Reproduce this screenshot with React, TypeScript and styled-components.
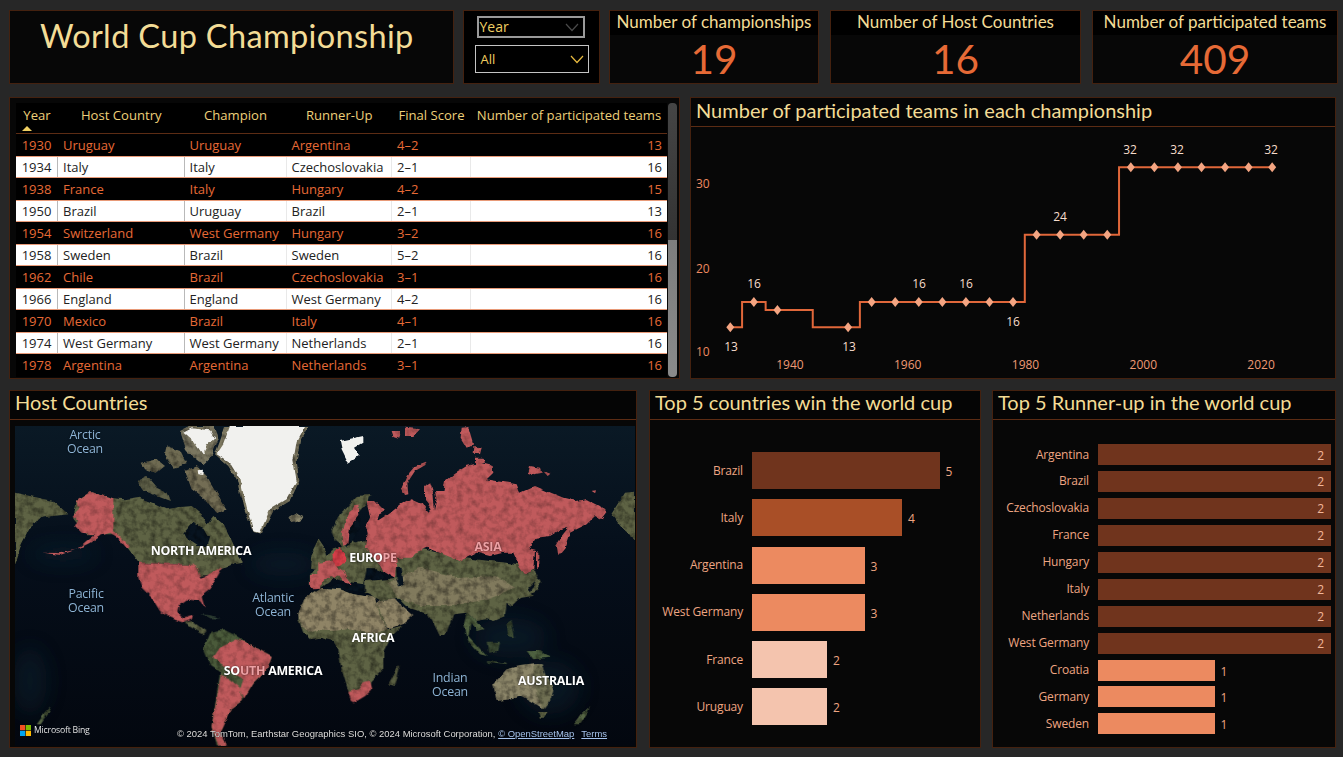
import React from "react";
import styled, { createGlobalStyle } from "styled-components";

const Global = createGlobalStyle`
  html, body { margin: 0; padding: 0; background: #272727; overflow: hidden; }
  * { box-sizing: border-box; }
`;

const TITLE = `"Lato", "Open Sans", sans-serif`;
const BODY = `"Open Sans", "Noto Sans", sans-serif`;
const YELLOW = "#f3dc96";
const ORANGE = "#e66a36";
const EDGE = "#44210f";

const Page = styled.div`
  width: 1343px;
  height: 757px;
  padding: 10px 6px 0 9px;
  display: flex;
  flex-direction: column;
  background: #272727;
  font-family: ${BODY};
`;
const Row = styled.div<{ $h: number; $top?: number; $gap: number }>`
  display: flex;
  height: ${(p) => p.$h}px;
  margin-top: ${(p) => p.$top ?? 0}px;
  gap: ${(p) => p.$gap}px;
`;
const Panel = styled.section<{ $w: number }>`
  width: ${(p) => p.$w}px;
  flex: none;
  background: #070707;
  border: 1px solid ${EDGE};
  display: flex;
  flex-direction: column;
  overflow: hidden;
`;
const TitlePanel = styled(Panel)`
  padding: 1px 0 0 30px;
`;
const Heading = styled.h1`
  margin: 0;
  font: 400 32.5px/48px ${TITLE};
  color: ${YELLOW};
  letter-spacing: 0.35px;
`;
const SlicerPanel = styled(Panel)`
  background: #000;
  align-items: center;
  padding-top: 5px;
`;
const Dropdown = styled.div<{ $w: number; $h: number; $dim?: boolean }>`
  width: ${(p) => p.$w}px;
  height: ${(p) => p.$h}px;
  margin-bottom: 7px;
  margin-left: ${(p) => (p.$dim ? -2 : 0)}px;
  border: ${(p) => (p.$dim ? "2px solid #9a9a9a" : "1px solid #c4c4c4")};
  display: flex;
  align-items: center;
  justify-content: space-between;
  padding: ${(p) => (p.$dim ? 0 : 1)}px 4px 0 ${(p) => (p.$dim ? 1 : 5)}px;
  font: 400 ${(p) => (p.$dim ? 14 : 13)}px/1 ${BODY};
  color: #f0cf62;
`;
const CardGroup = styled.div`
  display: flex;
  gap: 11px;
`;
const Card = styled(Panel)`
  align-items: stretch;
`;
const CardHead = styled.div`
  height: 24px;
  background: #000;
  text-align: center;
  font: 400 17px/21px ${TITLE};
  color: ${YELLOW};
  white-space: nowrap;
`;
const CardValue = styled.div`
  flex: 1;
  text-align: center;
  font: 400 40.5px/48px ${TITLE};
  color: ${ORANGE};
`;
const TablePanel = styled(Panel)`
  flex-direction: row;
  padding: 5px 0 0 6px;
`;
const Table = styled.div`
  width: 651px;
  flex: none;
  overflow: hidden;
`;
const COLS = "42px 126.5px 102px 105.5px 79px 196px";
const HeadRow = styled.div`
  display: grid;
  grid-template-columns: ${COLS};
  height: 31px;
  background: #000;
  border-bottom: 1px solid #5c2c14;
`;
const HeadCell = styled.div`
  position: relative;
  text-align: center;
  font: 400 13.1px/25px ${BODY};
  color: #eed07a;
  white-space: nowrap;
`;
const SortMark = styled.span`
  position: absolute;
  left: 6px;
  top: 23px;
  width: 0;
  height: 0;
  border-left: 5px solid transparent;
  border-right: 5px solid transparent;
  border-bottom: 5px solid #f0cf62;
`;
const DataRow = styled.div<{ $light: boolean }>`
  display: grid;
  grid-template-columns: ${COLS};
  height: 22.05px;
  background: ${(p) => (p.$light ? "#fff" : "#000")};
  color: ${(p) => (p.$light ? "#222" : ORANGE)};
  border-top: 1px solid ${(p) => (p.$light ? "#e89a78" : "#000")};
  border-bottom: 1px solid ${(p) => (p.$light ? "#e89a78" : "#000")};
`;
const Cell = styled.div<{ $light: boolean; $align?: string; $strong?: boolean }>`
  padding: 0 5px;
  text-align: ${(p) => p.$align ?? "left"};
  font: 400 13px/20.5px ${BODY};
  white-space: nowrap;
  overflow: hidden;
  border-right: 1px solid ${(p) => (!p.$light ? "transparent" : p.$strong ? "#b9b9b9" : "#e9e9e9")};
  &:last-child { border-right: 0; }
`;
const Scroll = styled.div`
  width: 9px;
  margin: 0 0 1px 1px;
  border-radius: 4px;
  background: linear-gradient(#454545 0, #333 50%, #7d7d7d 50%, #8a8a8a 100%);
`;
const PanelHead = styled.h2<{ $lh: number }>`
  margin: 0;
  flex: none;
  height: 29px;
  padding-left: 5px;
  background: #050505;
  border-bottom: 1px solid #5c2c14;
  font: 400 20px/${(p) => p.$lh}px ${TITLE};
  color: ${YELLOW};
  white-space: nowrap;
`;
const ChartBody = styled.div`
  flex: 1;
  position: relative;
`;
const ChartSvg = styled.svg`
  display: block;
  font-family: ${BODY};
  font-size: 12px;
`;
const MapBody = styled.div`
  flex: 1;
  padding: 6px 2px 2px 5px;
`;
const MapFrame = styled.div`
  position: relative;
  width: 620px;
  height: 320px;
  overflow: hidden;
  background: #04101c;
`;
const MapSvg = styled.svg`
  display: block;
`;
const MapLabel = styled.span<{ $x: number; $y: number; $kind: "sea" | "land" }>`
  position: absolute;
  left: ${(p) => p.$x}px;
  top: ${(p) => p.$y}px;
  transform: translate(-50%, -50%);
  text-align: center;
  white-space: nowrap;
  font: ${(p) => (p.$kind === "land" ? 700 : 400)} 12.4px/14px ${BODY};
  letter-spacing: ${(p) => (p.$kind === "land" ? -0.25 : -0.2)}px;
  color: ${(p) => (p.$kind === "land" ? "#fff" : "#8db4d6")};
  text-shadow: 0 0 2px rgba(0, 0, 0, 0.7);
`;
const Pink = styled.span`
  color: #eda0a4;
`;
const Brand = styled.div`
  position: absolute;
  left: 5px;
  bottom: 10px;
  display: flex;
  align-items: center;
  gap: 3px;
  font: 400 8.7px/11px "Open Sans", sans-serif;
  letter-spacing: -0.2px;
  color: #e2e2e2;
`;
const Credit = styled.div`
  position: absolute;
  left: 162px;
  bottom: 7px;
  display: flex;
  gap: 7px;
  font: 400 9.45px/11px "Liberation Sans", sans-serif;
  color: #dcdcdc;
  white-space: nowrap;
  text-shadow: 0 0 1px #000;
`;
const CreditLink = styled.span`
  color: #a6c4ee;
  text-decoration: underline;
`;
const ChartGroup = styled.div`
  display: flex;
  gap: 11px;
`;
const BarList = styled.div<{ $pad: number; $gap: number }>`
  flex: 1;
  display: flex;
  flex-direction: column;
  padding-top: ${(p) => p.$pad}px;
  gap: ${(p) => p.$gap}px;
`;
const BarRow = styled.div<{ $h: number; $label: number }>`
  display: grid;
  grid-template-columns: ${(p) => p.$label}px 1fr;
  column-gap: 9px;
  align-items: center;
  height: ${(p) => p.$h}px;
  flex: none;
`;
const BarName = styled.div`
  text-align: right;
  font: 400 12px/14px ${BODY};
  letter-spacing: -0.15px;
  color: #eea582;
  white-space: nowrap;
`;
const BarTrack = styled.div`
  display: flex;
  align-items: center;
  height: 100%;
`;
const Bar = styled.div<{ $fill: string }>`
  height: 100%;
  flex: none;
  background: ${(p) => p.$fill};
  display: flex;
  align-items: center;
  justify-content: flex-end;
  padding-right: 7px;
  padding-top: 2px;
  font: 400 12px/1 ${BODY};
  color: #f3b699;
`;
const BarValue = styled.span`
  margin-left: 6px;
  padding-top: 3px;
  font: 400 12px/1 ${BODY};
  color: #eea582;
`;

const Chevron = ({ c }: { c: string }) => (
  <svg width="14" height="9" viewBox="0 0 14 9">
    <path d="M1 1l6 6.5L13 1" fill="none" stroke={c} strokeWidth="1.2" />
  </svg>
);

const rows = [
  ["1930", "Uruguay", "Uruguay", "Argentina", "4–2", "13"],
  ["1934", "Italy", "Italy", "Czechoslovakia", "2–1", "16"],
  ["1938", "France", "Italy", "Hungary", "4–2", "15"],
  ["1950", "Brazil", "Uruguay", "Brazil", "2–1", "13"],
  ["1954", "Switzerland", "West Germany", "Hungary", "3–2", "16"],
  ["1958", "Sweden", "Brazil", "Sweden", "5–2", "16"],
  ["1962", "Chile", "Brazil", "Czechoslovakia", "3–1", "16"],
  ["1966", "England", "England", "West Germany", "4–2", "16"],
  ["1970", "Mexico", "Brazil", "Italy", "4–1", "16"],
  ["1974", "West Germany", "West Germany", "Netherlands", "2–1", "16"],
  ["1978", "Argentina", "Argentina", "Netherlands", "3–1", "16"],
];
const heads = ["Year", "Host Country", "Champion", "Runner-Up", "Final Score", "Number of participated teams"];

const OX = 691;
const OY = 127;
const px = (yr: number) => 730.3 + (yr - 1930) * 5.89 - OX;
const YV: Record<number, number> = { 13: 327.3, 15: 310, 16: 302, 24: 234.7, 32: 167.3 };
const py = (v: number) => YV[v] - OY;
const series: [number, number][] = [
  [1930, 13], [1934, 16], [1938, 15], [1950, 13], [1954, 16], [1958, 16], [1962, 16], [1966, 16],
  [1970, 16], [1974, 16], [1978, 16], [1982, 24], [1986, 24], [1990, 24], [1994, 24], [1998, 32],
  [2002, 32], [2006, 32], [2010, 32], [2014, 32], [2018, 32], [2022, 32],
];
const stepPath = series.reduce((d, [yr, v], i) => {
  if (i === 0) return `M${px(yr)} ${py(v)}`;
  const [py0] = series[i - 1];
  const mid = px((py0 + yr) / 2);
  return `${d}H${mid}V${py(v)}`;
}, "") + `H${px(2022)}`;
const dataLabels: [number, number, string][] = [
  [731, 351, "13"], [754, 288, "16"], [849, 351, "13"], [919, 288, "16"], [966, 288, "16"],
  [1013, 326, "16"], [1060, 221, "24"], [1130, 154, "32"], [1177, 154, "32"], [1271, 154, "32"],
];

const winners: [string, number, string][] = [
  ["Brazil", 5, "#70341d"], ["Italy", 4, "#a94f27"], ["Argentina", 3, "#ec8a60"],
  ["West Germany", 3, "#ec8a60"], ["France", 2, "#f4c4ae"], ["Uruguay", 2, "#f4c4ae"],
];
const runners: [string, number][] = [
  ["Argentina", 2], ["Brazil", 2], ["Czechoslovakia", 2], ["France", 2], ["Hungary", 2], ["Italy", 2],
  ["Netherlands", 2], ["West Germany", 2], ["Croatia", 1], ["Germany", 1], ["Sweden", 1],
];

const OLIVE = "#5e6344";
const TAN = "#8f8466";
const RED = "#c05a5c";
const SEA = "#07131f";

const SatFilter = ({ id, dark, lift }: { id: string; dark: string; lift: string }) => (
  <filter id={id} filterUnits="userSpaceOnUse" x="15" y="15" width="1860" height="960" colorInterpolationFilters="sRGB">
    <feTurbulence type="fractalNoise" baseFrequency="0.035" numOctaves="4" seed="7" result="warp" />
    <feDisplacementMap in="SourceGraphic" in2="warp" scale="13" xChannelSelector="R" yChannelSelector="G" result="shape" />
    <feGaussianBlur in="shape" stdDeviation="2" result="soft" />
    <feTurbulence type="fractalNoise" baseFrequency="0.05" numOctaves="3" seed="3" result="n" />
    <feColorMatrix in="n" type="matrix" values={`0 0 0 0 0  0 0 0 0 0  0 0 0 0 0  ${dark} 0 0 0 ${lift}`} result="spots" />
    <feComposite in="spots" in2="soft" operator="in" result="clip" />
    <feMerge>
      <feMergeNode in="soft" />
      <feMergeNode in="clip" />
    </feMerge>
  </filter>
);

const Poly = ({ c, p, o }: { c?: string; p: string; o?: number }) => <polygon fill={c} points={p} opacity={o} />;

const WorldMap = () => (
  <MapSvg width="620" height="320" viewBox="15 15 1860 960">
    <defs>
      <linearGradient id="sea" x1="0" y1="0" x2="0" y2="1">
        <stop offset="0" stopColor="#0a1925" />
        <stop offset="0.42" stopColor="#050e1a" />
        <stop offset="1" stopColor="#03070f" />
      </linearGradient>
      <filter id="glow" filterUnits="userSpaceOnUse" x="15" y="15" width="1860" height="960">
        <feGaussianBlur stdDeviation="30" />
      </filter>
      <SatFilter id="sat" dark="1.0" lift="-.4" />
      <SatFilter id="satRed" dark=".55" lift="-.22" />
      <SatFilter id="snow" dark="0" lift="0" />
    </defs>
    <rect x="15" y="15" width="1860" height="960" fill="url(#sea)" />
    <g filter="url(#glow)" fill="#0f2836" opacity="0.45">
      <ellipse cx="1500" cy="650" rx="110" ry="60" />
      <ellipse cx="1620" cy="800" rx="90" ry="80" />
      <ellipse cx="60" cy="780" rx="50" ry="100" />
      <ellipse cx="820" cy="430" rx="100" ry="35" />
      <ellipse cx="160" cy="400" rx="100" ry="25" />
    </g>
    <g filter="url(#sat)">
      {/* Canada and the Arctic */}
      <Poly c={OLIVE} p="200,240 240,213 310,232 345,235 385,228 430,245 470,265 510,258 545,255 575,280 590,310 610,285 640,310 660,350 680,395 700,425 660,432 640,440 600,460 570,465 550,432 385,425 360,390 320,340 230,340 190,290" />
      <Poly c="#5f6048" p="380,180 410,165 440,200 470,215 480,240 440,225 400,210" />
      <Poly c={OLIVE} p="15,215 60,225 130,240 175,280 130,285 95,290 60,320 35,370 25,400 15,430" />
      <Poly c={OLIVE} p="1805,280 1845,215 1875,212 1875,355 1835,320" />
      <Poly c="#6f6b52" p="395,125 440,115 465,135 440,155 405,145" />
      <Poly c="#6f6b52" p="470,75 510,90 530,130 490,140 465,100" />
      <Poly c="#736d54" p="525,150 560,135 590,165 620,215 650,265 620,278 590,240 545,205" />
      <Poly c="#7a7660" p="510,30 540,15 610,15 625,55 605,105 580,130 530,90" />
      <Poly c={SEA} p="520,335 545,305 580,320 597,350 590,375 560,375 530,355" />
      <Poly c="#7d7860" p="645,15 895,15 870,60 860,120 868,180 840,240 790,270 755,338 730,332 700,260 680,175 655,135 615,100 630,60" />
      <Poly c="#8f8a6e" p="835,290 860,275 880,285 870,300 850,305" />
      <Poly c={OLIVE} p="905,395 925,355 945,385 950,420 925,445 900,440" />
      {/* Eurasia */}
      <g transform="translate(930,0)">
        <Poly c={OLIVE} p="35,330 60,280 110,225 150,222 138,250 118,270 100,310 92,350 110,375 70,380 45,360" />
        <Poly c={OLIVE} p="-10,430 40,385 135,360 180,430 190,450 140,445 130,490 70,480 40,470 0,500 -30,490 -30,462" />
        <Poly c={OLIVE} p="170,400 230,400 290,380 420,410 600,430 615,460 640,440 655,470 625,500 640,525 600,530 575,555 560,545 555,585 520,600 500,595 470,600 440,575 400,580 375,645 360,645 340,605 325,580 280,565 265,560 240,535 228,535 180,540 135,515 135,480 200,475 225,470" />
        <Poly c={TAN} p="205,485 300,440 420,470 530,465 585,500 500,535 400,555 300,555 235,530" o={0.72} />
        <Poly c={TAN} p="180,540 228,535 245,555 280,585 255,605 215,620 205,620 165,550" />
        <Poly c="#50603f" p="440,575 470,600 490,625 470,630 452,605 445,645 500,705 480,700 445,660 432,610" />
        <Poly c={OLIVE} p="650,470 665,480 650,510 622,525 640,500" />
        <Poly c={SEA} p="140,445 175,445 195,470 160,478 140,465" />
        <Poly c={SEA} p="228,440 245,440 252,490 238,500 230,480" />
        <Poly c={SEA} p="228,535 240,535 268,565 250,558" />
        <Poly c={SEA} p="0,498 70,490 130,490 130,515 70,505 20,520" />
        <Poly c={SEA} p="88,300 120,285 118,320 100,355 80,378 75,350" />
        <Poly c="#4e6140" p="620,690 660,690 690,710 640,715" />
        <Poly c="#3b4a33" p="500,665 540,665 535,690 505,695" />
        <Poly c="#3b4a33" p="560,610 575,600 585,650 565,645" />
        <Poly c="#3b4a33" p="500,720 560,728 560,733 505,726" />
      </g>
      {/* Africa, Madagascar, Australia, New Zealand */}
      <g transform="translate(930,495)">
        <Poly c={OLIVE} p="-65,85 -45,35 0,5 60,10 100,25 165,35 170,55 205,130 250,118 215,150 190,200 190,250 155,285 145,315 100,345 85,315 65,250 55,190 40,165 0,155 -30,160 -50,140 -65,100" />
        <Poly c={TAN} p="-65,85 -45,35 0,5 60,10 100,25 165,35 175,80 205,130 170,140 80,130 40,135 0,130 -30,140 -55,120" />
        <Poly c="#5a5f42" p="205,295 235,240 238,250 225,300" />
        <Poly c="#8c8669" p="520,295 560,250 600,240 640,235 665,235 675,265 700,310 690,345 670,370 640,350 605,330 575,340 530,345" />
        <Poly c={OLIVE} p="640,240 665,235 675,265 700,310 690,345 670,370 650,330" o={0.6} />
        <Poly c={OLIVE} p="655,378 680,378 672,395 660,395" />
        <Poly c="#566544" p="762,415 785,385 810,360 800,382 778,415" />
      </g>
      {/* Central and South America */}
      <g transform="translate(0,495)">
        <Poly c={OLIVE} p="520,110 550,105 590,135 580,145 545,125" />
        <Poly c="#3a4d3e" p="570,85 600,88 630,98 600,96" />
        <Poly c="#4a5a3a" p="580,190 600,140 640,130 680,150 710,170 785,210 770,250 730,290 695,345 660,370 630,440 645,478 620,478 605,420 630,260 600,240" />
        <Poly c="#566544" p="80,415 102,385 125,360 115,382 92,415" />
      </g>
    </g>
    <g filter="url(#snow)" fill="#f1f1ee">
      <Poly p="660,15 885,15 860,60 850,120 860,180 830,235 780,265 750,335 730,330 710,260 690,170 665,130 620,100 640,70" />
      <Poly p="520,35 545,22 600,28 615,50 590,75 578,100 552,62" />
      <Poly p="560,148 582,146 580,162 562,160" />
      <Poly p="990,60 1060,45 1060,65 1035,80 1050,105 1015,125 995,85" />
    </g>
    <g fill={RED} filter="url(#satRed)">
      <Poly p="240,213 310,232 310,330 320,335 345,360 358,380 350,382 325,350 300,335 270,345 240,365 210,380 150,402 100,395 150,396 200,385 235,355 255,340 215,335 195,315 205,295 188,285 205,265 200,240" />
      <g transform="translate(930,0)">
        <Poly p="140,240 165,240 195,270 170,285 175,298 195,285 215,270 240,250 275,232 305,245 325,275 335,265 315,240 315,195 330,185 340,215 345,270 350,240 345,210 370,210 375,180 400,160 440,135 480,125 518,135 520,155 500,175 530,180 565,185 590,190 600,215 645,195 680,210 730,230 770,240 800,235 840,255 860,275 845,295 825,285 800,310 770,325 750,335 745,320 715,330 690,345 650,350 625,385 645,390 640,440 615,460 600,440 580,395 550,395 510,405 470,395 420,420 370,400 320,380 285,395 275,410 230,410 225,470 190,450 180,430 135,380 140,340 135,320 150,290" />
        <Poly p="745,320 750,335 735,380 715,405 710,370 725,345" />
        <Poly p="648,390 655,392 655,440 648,440" />
        <Poly p="318,122 320,130 285,150 262,185 265,220 255,222 245,200 260,165 285,135" />
        <Poly p="425,20 445,18 460,70 440,80 422,50" />
        <Poly p="460,75 485,80 480,100 458,98" />
        <Poly p="465,110 490,110 495,125 465,130" />
        <Poly p="215,30 240,30 235,50 220,45" />
        <Poly p="255,20 300,25 280,45 255,45" />
        <Poly p="630,135 660,140 665,155 640,160 625,155" />
        <Poly p="668,148 688,155 680,162" />
        <Poly p="812,210 828,208 825,218" />
        <Poly p="65,345 85,270 115,250 118,285 90,320 85,365 70,375" />
        <Poly p="-5,425 40,420 55,440 70,450 85,480 92,490 75,485 55,460 45,470 30,465 10,480 0,500 -20,502 -30,490 -30,462 -5,462" />
      </g>
      <g transform="translate(930,495)">
        <Poly p="85,318 115,310 130,290 150,283 157,310 135,330 105,348 93,345" />
      </g>
      <g transform="translate(0,495)">
        <Poly p="385,-70 555,-63 575,-25 605,-40 640,-60 620,-25 600,10 575,30 585,65 570,45 530,40 510,55 505,80 520,95 550,85 545,100 520,110 480,95 450,75 425,35 395,5 385,-30" />
        <Poly p="610,215 630,185 680,160 710,170 785,210 770,250 730,290 700,340 690,310 700,280 670,260 640,235" />
        <Poly p="632,270 660,280 690,305 695,345 660,370 640,420 630,440 648,478 625,478 605,420 620,340" />
      </g>
      <g transform="translate(930,0)" fill="#d63e48">
        <Poly p="38,400 55,382 78,395 75,425 50,435 38,420" />
      </g>
    </g>
  </MapSvg>
);

export default function App() {
  return (
    <Page>
      <Global />
      <Row $h={74} $gap={9}>
        <TitlePanel $w={445}>
          <Heading>World Cup Championship</Heading>
        </TitlePanel>
        <SlicerPanel $w={137}>
          <Dropdown $w={108} $h={22} $dim>
            Year <Chevron c="#4a4a4a" />
          </Dropdown>
          <Dropdown $w={114} $h={28}>
            All <Chevron c="#e7b93f" />
          </Dropdown>
        </SlicerPanel>
        <CardGroup>
          {[
            ["Number of championships", "19", 210],
            ["Number of Host Countries", "16", 251],
            ["Number of participated teams", "409", 246],
          ].map(([t, v, w]) => (
            <Card key={t as string} $w={w as number}>
              <CardHead>{t}</CardHead>
              <CardValue>{v}</CardValue>
            </Card>
          ))}
        </CardGroup>
      </Row>

      <Row $h={282} $top={13} $gap={10}>
        <TablePanel $w={671}>
          <Table>
            <HeadRow>
              {heads.map((h, i) => (
                <HeadCell key={h}>
                  {h}
                  {i === 0 && <SortMark />}
                </HeadCell>
              ))}
            </HeadRow>
            {rows.map((r, i) => (
              <DataRow key={r[0]} $light={i % 2 === 1}>
                {r.map((c, j) => (
                  <Cell key={j} $light={i % 2 === 1} $strong={j < 2} $align={j === 0 ? "center" : j === 5 ? "right" : "left"}>
                    {c}
                  </Cell>
                ))}
              </DataRow>
            ))}
          </Table>
          <Scroll />
        </TablePanel>
        <Panel $w={646}>
          <PanelHead $lh={25}>Number of participated teams in each championship</PanelHead>
          <ChartBody>
            <ChartSvg width="644" height="251" viewBox="0 0 644 251">
              {[[30, 188], [20, 273], [10, 356]].map(([v, y]) => (
                <text key={v} x={5} y={y - OY} fill="#ee8a60">{v}</text>
              ))}
              {[1940, 1960, 1980, 2000, 2020].map((yr) => (
                <text key={yr} x={px(yr) + 0.7} y={369 - OY} textAnchor="middle" fill="#ee9a75">{yr}</text>
              ))}
              <path d={stepPath} fill="none" stroke="#e0673a" strokeWidth="2" />
              {series.map(([yr, v]) => {
                const x = px(yr);
                const y = py(v);
                return <path key={yr} d={`M${x} ${y - 5}L${x + 4} ${y}L${x} ${y + 5}L${x - 4} ${y}Z`} fill="#f4a582" />;
              })}
              {dataLabels.map(([x, y, t], i) => (
                <text key={i} x={x - OX} y={y - OY} textAnchor="middle" fill="#f6dccb">{t}</text>
              ))}
            </ChartSvg>
          </ChartBody>
        </Panel>
      </Row>

      <Row $h={358} $top={11} $gap={12}>
        <Panel $w={628}>
          <PanelHead $lh={22}>Host Countries</PanelHead>
          <MapBody>
            <MapFrame>
              <WorldMap />
              <MapLabel $kind="sea" $x={70} $y={16}>Arctic<br />Ocean</MapLabel>
              <MapLabel $kind="sea" $x={71} $y={175}>Pacific<br />Ocean</MapLabel>
              <MapLabel $kind="sea" $x={258} $y={179}>Atlantic<br />Ocean</MapLabel>
              <MapLabel $kind="sea" $x={435} $y={259}>Indian<br />Ocean</MapLabel>
              <MapLabel $kind="land" $x={186} $y={125}>NORTH AMERICA</MapLabel>
              <MapLabel $kind="land" $x={358} $y={132}>EURO<Pink>PE</Pink></MapLabel>
              <MapLabel $kind="land" $x={473} $y={121}><Pink>ASIA</Pink></MapLabel>
              <MapLabel $kind="land" $x={358} $y={212}>AFRICA</MapLabel>
              <MapLabel $kind="land" $x={258} $y={245}>SO<Pink>UTH</Pink> AMERICA</MapLabel>
              <MapLabel $kind="land" $x={536} $y={255}>AUSTRALIA</MapLabel>
              <Brand>
                <svg width="11" height="11" viewBox="0 0 11 11">
                  <rect width="5.2" height="5.2" fill="#f25022" />
                  <rect x="5.8" width="5.2" height="5.2" fill="#7fba00" />
                  <rect y="5.8" width="5.2" height="5.2" fill="#00a4ef" />
                  <rect x="5.8" y="5.8" width="5.2" height="5.2" fill="#ffb900" />
                </svg>
                Microsoft Bing
              </Brand>
              <Credit>
                <span>© 2024 TomTom, Earthstar Geographics SIO, © 2024 Microsoft Corporation, <CreditLink>© OpenStreetMap</CreditLink></span>
                <CreditLink>Terms</CreditLink>
              </Credit>
            </MapFrame>
          </MapBody>
        </Panel>
        <ChartGroup>
          <Panel $w={332}>
            <PanelHead $lh={22}>Top 5 countries win the world cup</PanelHead>
            <BarList $pad={32} $gap={10.3}>
              {winners.map(([n, v, f]) => (
                <BarRow key={n} $h={37} $label={93}>
                  <BarName>{n}</BarName>
                  <BarTrack>
                    <Bar $fill={f} style={{ width: v * 37.5 }} />
                    <BarValue>{v}</BarValue>
                  </BarTrack>
                </BarRow>
              ))}
            </BarList>
          </Panel>
          <Panel $w={344}>
            <PanelHead $lh={22}>Top 5 Runner-up in the world cup</PanelHead>
            <BarList $pad={24} $gap={5.95}>
              {runners.map(([n, v]) => (
                <BarRow key={n} $h={21} $label={96}>
                  <BarName>{n}</BarName>
                  <BarTrack>
                    <Bar $fill={v === 2 ? "#70341d" : "#ec8a60"} style={{ width: v * 116.6 }}>
                      {v === 2 ? v : null}
                    </Bar>
                    {v === 1 && <BarValue>{v}</BarValue>}
                  </BarTrack>
                </BarRow>
              ))}
            </BarList>
          </Panel>
        </ChartGroup>
      </Row>
    </Page>
  );
}
